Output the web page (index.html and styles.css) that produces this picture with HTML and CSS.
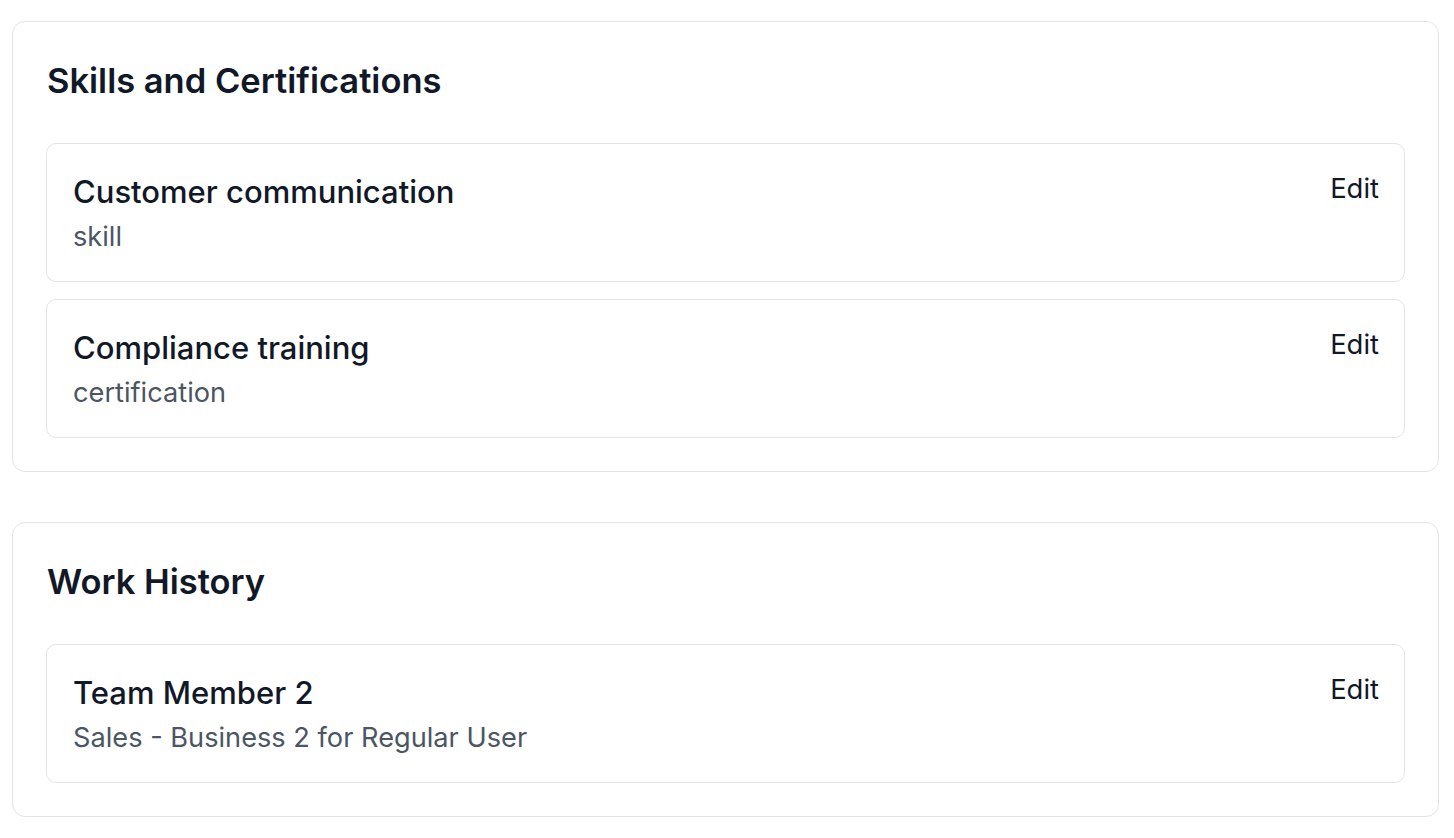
FILE: index.html
```html
<!DOCTYPE html>
<html>
<head>
<meta charset="utf-8">
<link rel="stylesheet" href="styles.css">
</head>
<body>
<main class="page">
  <section class="card">
    <h2 class="card-title">Skills and Certifications</h2>
    <div class="list">
      <div class="item">
        <div class="item-text">
          <div class="item-title">Customer communication</div>
          <div class="item-sub">skill</div>
        </div>
        <button class="edit">Edit</button>
      </div>
      <div class="item">
        <div class="item-text">
          <div class="item-title">Compliance training</div>
          <div class="item-sub">certification</div>
        </div>
        <button class="edit">Edit</button>
      </div>
    </div>
  </section>
  <section class="card">
    <h2 class="card-title">Work History</h2>
    <div class="list">
      <div class="item">
        <div class="item-text">
          <div class="item-title">Team Member 2</div>
          <div class="item-sub">Sales - Business 2 for Regular User</div>
        </div>
        <button class="edit">Edit</button>
      </div>
    </div>
  </section>
</main>
</body>
</html>
```

FILE: styles.css
```css
html, body {
  margin: 0;
  padding: 0;
  background: #ffffff;
}
body {
  font-family: Inter, "Noto Sans", sans-serif;
  color: #111827;
}
.page {
  display: flex;
  flex-direction: column;
  gap: 50px;
  padding: 21px 15px 0 12px;
}
.card {
  border: 1px solid #e3e4e8;
  border-radius: 13px;
  padding: 39px 33px 33px 33px;
}
.card-title {
  margin: 0 0 42px 1px;
  font-size: 34.5px;
  line-height: 40px;
  font-weight: 600;
  color: #111827;
}
.list {
  display: flex;
  flex-direction: column;
  gap: 17px;
}
.item {
  border: 1px solid #e3e4e8;
  border-radius: 10px;
  padding: 30px 25px 28px 26px;
  display: flex;
  justify-content: space-between;
  align-items: flex-start;
}
.item-title {
  font-size: 31px;
  line-height: 36px;
  font-weight: 500;
  color: #111827;
}
.item-sub {
  margin-top: 11px;
  font-size: 27.2px;
  line-height: 32px;
  color: #4b5563;
}
.edit {
  border: 0;
  background: none;
  padding: 0;
  font-family: inherit;
  font-size: 27.4px;
  line-height: 28px;
  color: #111827;
  cursor: pointer;
}
```
